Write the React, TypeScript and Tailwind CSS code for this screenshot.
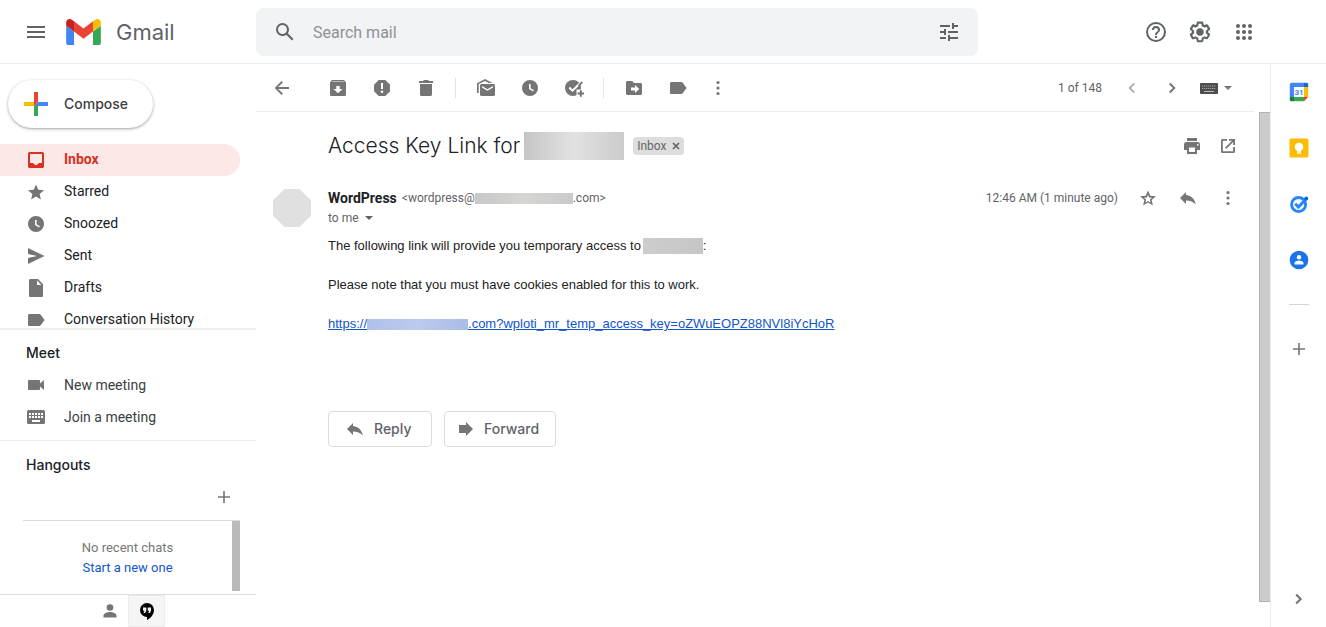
import React, { type ReactNode } from "react";

type IconProps = { children: ReactNode; box?: number; className?: string };

function Icon({ children, box = 20, className = "size-5" }: IconProps) {
  return (
    <svg viewBox={`0 0 ${box} ${box}`} className={`shrink-0 ${className}`} fill="currentColor" aria-hidden="true">
      {children}
    </svg>
  );
}

function IconButton({ label, children, className = "" }: { label: string; children: ReactNode; className?: string }) {
  return (
    <button type="button" aria-label={label} className={`flex shrink-0 items-center justify-center ${className}`}>
      {children}
    </button>
  );
}

const Clock = () => (
  <Icon>
    <path fillRule="evenodd" d="M10 2a8 8 0 1 0 0 16 8 8 0 0 0 0-16zm-1 4h1.6v4.2l3.3 2-.8 1.3L9 11z" />
  </Icon>
);
const Label = () => (
  <Icon>
    <path d="M13.4 4H3.6C2.7 4 2 4.7 2 5.6v8.8c0 .9.7 1.6 1.6 1.6h9.8c.5 0 1-.3 1.3-.7L18.6 10l-3.9-5.3c-.3-.4-.8-.7-1.3-.7z" />
  </Icon>
);
const More = () => (
  <Icon>
    <circle cx="10" cy="4.5" r="1.600" />
    <circle cx="10" cy="10" r="1.600" />
    <circle cx="10" cy="15.5" r="1.600" />
  </Icon>
);
const ReplyArrow = () => (
  <Icon>
    <path d="M8 7V4L2 10l6 6v-3.6c4.2 0 7.3 1.2 9.8 4.1-.7-4.200-3.300-8.500-9.800-9.500z" />
  </Icon>
);
const Plus = () => (
  <Icon>
    <path d="M16 10.800h-5.200V16H9.200v-5.200H4V9.200h5.200V4h1.600v5.200H16z" />
  </Icon>
);
const Caret = () => (
  <svg viewBox="0 0 8 4" className="h-1 w-2 shrink-0" fill="currentColor" aria-hidden="true">
    <path d="M0 0h8L4 4z" />
  </svg>
);
const Keyboard = () => (
  <Icon>
    <path
      fillRule="evenodd"
      d="M2.500 3h15A1.500 1.500 0 0 1 19 4.500v11a1.500 1.500 0 0 1-1.500 1.500h-15A1.500 1.500 0 0 1 1 15.500v-11A1.500 1.500 0 0 1 2.500 3zM3 6v2h2V6zm3 0v2h2V6zm3 0v2h2V6zm3 0v2h2V6zm3 0v2h2V6zM3 9v2h2V9zm3 0v2h2V9zm3 0v2h2V9zm3 0v2h2V9zm3 0v2h2V9zM6 13v2h8v-2z"
    />
  </Icon>
);

function Logo() {
  return (
    <svg viewBox="52 42 88 66" className="h-[26px] w-[35px]" aria-hidden="true">
      <path fill="#4285f4" d="M58 108h14V74L52 59v43c0 3.320 2.690 6 6 6" />
      <path fill="#34a853" d="M120 108h14c3.320 0 6-2.690 6-6V59l-20 15" />
      <path fill="#fbbc04" d="M120 48v26l20-15v-8c0-7.420-8.470-11.650-14.400-7.200" />
      <path fill="#ea4335" d="M72 74V48l24 18 24-18v26L96 92" />
      <path fill="#c5221f" d="M52 51v8l20 15V48l-5.600-4.200c-5.940-4.450-14.400-.22-14.400 7.200" />
    </svg>
  );
}

function Header() {
  return (
    <header className="flex h-16 shrink-0 items-center border-b border-[#ececec] text-[#5f6368]">
      <div className="flex w-64 shrink-0 items-center pl-6">
        <IconButton label="Main menu">
          <Icon box={24} className="size-6">
            <path d="M3 18h18v-2H3zm0-5h18v-2H3zm0-7v2h18V6z" />
          </Icon>
        </IconButton>
        <a href="#inbox" className="ml-[18px] flex items-center gap-[15px]">
          <Logo />
          <span className="font-['Inter',sans-serif] text-[22px] leading-6">Gmail</span>
        </a>
      </div>
      <form className="flex h-12 max-w-[722px] flex-1 items-center rounded-lg bg-[#f1f3f4] px-[17px]">
        <IconButton label="Search">
          <Icon box={24} className="size-6">
            <path d="M20.490 19l-5.730-5.730C15.530 12.200 16 10.910 16 9.500A6.500 6.500 0 1 0 9.500 16c1.410 0 2.700-.47 3.770-1.240L19 20.490zM5 9.500a4.500 4.500 0 1 1 9 0 4.500 4.500 0 0 1-9 0z" />
          </Icon>
        </IconButton>
        <input
          type="search"
          aria-label="Search mail"
          placeholder="Search mail"
          className="min-w-0 flex-1 bg-transparent px-4 pt-0.5 text-base outline-none placeholder:text-[#8e9194]"
        />
        <IconButton label="Show search options">
          <Icon box={24} className="size-6">
            <path d="M3 17v2h6v-2zM3 5v2h10V5zm10 16v-2h8v-2h-8v-2h-2v6zM7 9v2H3v2h4v2h2V9zm14 4v-2H11v2zm-6-4h2V7h4V5h-4V3h-2z" />
          </Icon>
        </IconButton>
      </form>
      <div className="mr-[70px] ml-auto flex gap-5">
        <IconButton label="Support">
          <Icon box={24} className="size-6">
            <path d="M11 18h2v-2h-2zm1-16a10 10 0 1 0 0 20 10 10 0 0 0 0-20zm0 18a8 8 0 1 1 0-16 8 8 0 0 1 0 16zm0-14a4 4 0 0 0-4 4h2a2 2 0 1 1 4 0c0 2-3 1.750-3 5h2c0-2.250 3-2.500 3-5a4 4 0 0 0-4-4z" />
          </Icon>
        </IconButton>
        <IconButton label="Settings">
          <Icon box={24} className="size-6">
            <path d="M13.850 22.250h-3.700c-.74 0-1.360-.54-1.450-1.270l-.27-1.890a7.500 7.500 0 0 1-.92-.53l-1.800.72c-.69.26-1.470-.03-1.810-.65L2.060 15.400c-.35-.66-.2-1.440.36-1.880l1.530-1.190a6.800 6.800 0 0 1 0-1.060L2.430 10.080c-.59-.46-.74-1.260-.37-1.880l1.850-3.210c.34-.62 1.110-.9 1.790-.63l1.810.73c.3-.2.600-.37.910-.52l.270-1.930c.09-.7.710-1.250 1.440-1.250h3.700c.740 0 1.360.54 1.450 1.270l.27 1.890c.32.16.620.34.920.530l1.800-.720c.7-.260 1.480.030 1.820.650l1.840 3.180c.36.66.2 1.440-.36 1.880l-1.520 1.190a7 7 0 0 1 0 1.060l1.520 1.190c.56.45.72 1.230.37 1.860l-1.860 3.220c-.34.62-1.110.9-1.800.63l-1.800-.72a7.500 7.500 0 0 1-.91.520l-.27 1.930c-.1.680-.72 1.220-1.460 1.220zm-3.230-2h2.760l.37-2.550.53-.22c.44-.18.88-.44 1.340-.78l.45-.34 2.380.96 1.380-2.400-2.030-1.580.07-.56a6 6 0 0 0 0-1.560l-.07-.56 2.030-1.580-1.390-2.400-2.390.96-.45-.35a6.400 6.400 0 0 0-1.320-.77l-.52-.22-.37-2.550h-2.760l-.37 2.550-.53.21c-.44.190-.880.440-1.340.790l-.45.330-2.380-.95-1.390 2.390 2.030 1.580-.07.560a6 6 0 0 0 0 1.580l.07.560-2.030 1.580 1.380 2.400 2.390-.96.450.350c.43.330.860.580 1.330.770l.53.220z" />
            <circle cx="12" cy="12" r="3.700" />
          </Icon>
        </IconButton>
        <IconButton label="Google apps">
          <Icon box={24} className="size-6">
            {[6, 12, 18].map((y) => [6, 12, 18].map((x) => <circle key={`${x}-${y}`} cx={x} cy={y} r="2" />))}
          </Icon>
        </IconButton>
      </div>
    </header>
  );
}

const folders: { name: string; icon: ReactNode; active?: boolean }[] = [
  {
    name: "Inbox",
    active: true,
    icon: (
      <Icon>
        <path fillRule="evenodd" d="M3.800 2h12.400c1 0 1.800.8 1.800 1.800v12.400c0 1-.8 1.800-1.800 1.800H3.800c-1 0-1.800-.8-1.800-1.800V3.800C2 2.800 2.800 2 3.800 2zM4 4v9h3.500v1h1.200v1h2.600v-1h1.200v-1H16V4z" />
      </Icon>
    ),
  },
  {
    name: "Starred",
    icon: (
      <Icon>
        <path d="M10 14.600l4.900 3-1.300-5.600L18 8.200l-5.700-.5L10 2.400 7.700 7.700 2 8.200 6.400 12l-1.300 5.600z" />
      </Icon>
    ),
  },
  { name: "Snoozed", icon: <Clock /> },
  {
    name: "Sent",
    icon: (
      <Icon>
        <path d="M2 2l16.500 8L2 18v-6l9-2-9-2z" />
      </Icon>
    ),
  },
  {
    name: "Drafts",
    icon: (
      <Icon>
        <path fillRule="evenodd" d="M4.600 1h7.400l5 5v11.400c0 .9-.7 1.600-1.600 1.600H4.600c-.9 0-1.600-.7-1.600-1.600V2.600C3 1.700 3.700 1 4.600 1zM11 2.500V7h4.500z" />
      </Icon>
    ),
  },
  { name: "Conversation History", icon: <Label /> },
];

function Sidebar() {
  return (
    <aside className="flex w-64 shrink-0 flex-col">
      <div className="px-2 py-4">
        <button
          type="button"
          className="flex h-12 items-center gap-[10px] rounded-full pr-[25px] pl-[10px] font-['Inter',sans-serif] text-sm font-medium text-[#3c4043] shadow-[0_1px_2px_0_rgba(60,64,67,0.3),0_1px_3px_1px_rgba(60,64,67,0.15)]"
        >
          <Icon box={36} className="size-9">
            <path fill="#34a853" d="M16 16v14h4V20z" />
            <path fill="#4285f4" d="M30 16H20l-4 4h14z" />
            <path fill="#fbbc05" d="M6 16v4h10l4-4z" />
            <path fill="#ea4335" d="M20 16V6h-4v14z" />
          </Icon>
          Compose
        </button>
      </div>
      <nav className="min-h-0 flex-1 overflow-hidden pr-4 text-sm">
        {folders.map((f) => (
          <a
            key={f.name}
            href={`#${f.name}`}
            className={
              f.active
                ? "flex h-8 items-center gap-[18px] rounded-r-full bg-[#fce8e6] pl-[26px] font-bold text-[#d93025]"
                : "flex h-8 items-center gap-[18px] pl-[26px] text-[#202124]"
            }
          >
            <span className={f.active ? "text-[#d93025]" : "text-[#757575]"}>{f.icon}</span>
            <span className="pb-0.5">{f.name}</span>
          </a>
        ))}
      </nav>
      <section className="border-t-2 border-[#efefef] pb-[7px] text-sm text-[#3c4043]">
        <h2 className="flex h-[39px] items-center pt-1.5 pl-[26px] font-['Inter',sans-serif] text-sm font-medium text-[#202124]">
          Meet
        </h2>
        <a href="#new-meeting" className="flex h-8 items-center gap-[18px] pl-[26px]">
          <Icon className="size-5 text-[#757575]">
            <path d="M14 8.500V5.800c0-.5-.4-.8-.8-.8H2.800c-.4 0-.8.300-.8.800v8.400c0 .500.400.800.800.800h10.400c.4 0 .8-.3.800-.8v-2.700l4 3.500V5z" />
          </Icon>
          New meeting
        </a>
        <a href="#join-meeting" className="flex h-8 items-center gap-[18px] pl-[26px]">
          <span className="text-[#757575]"><Keyboard /></span>
          Join a meeting
        </a>
      </section>
      <section className="border-t border-[#ececec] pt-3">
        <h2 className="flex h-6 items-center pl-[26px] font-['Inter',sans-serif] text-sm font-medium text-[#202124]">
          Hangouts
        </h2>
        <div className="flex h-[43px] items-center justify-end pr-[22px] pb-1 text-[#757575]">
          <IconButton label="New conversation">
            <Plus />
          </IconButton>
        </div>
        <div className="mr-4 ml-[23px] flex border-t border-[#dadce0]">
          <div className="flex-1 pt-[17px] text-center text-[13px] leading-5 text-[#777]">
            <p>No recent chats</p>
            <a href="#new-chat" className="text-[#15c]">
              Start a new one
            </a>
          </div>
          <div className="mb-[3px] h-[70px] w-2 bg-[#bababa]" />
        </div>
      </section>
      <div className="flex h-[33px] shrink-0 justify-center border-t border-[#dadce0]">
        <IconButton label="Contacts" className="w-[37px] text-[#757575]">
          <Icon>
            <circle cx="10" cy="6.500" r="3.300" />
            <path d="M3.500 16.500v-2c0-2.300 3.800-3.500 6.500-3.500s6.500 1.200 6.500 3.500v2z" />
          </Icon>
        </IconButton>
        <IconButton label="Hangouts" className="w-[37px] border border-[#ececec] bg-[#f5f5f5] text-black">
          <Icon>
            <path
              fillRule="evenodd"
              d="M10 2a7 7 0 1 0 0 14v3c3.700-1.900 7-5.600 7-10a7 7 0 0 0-7-7zM6 6.500h3.300v3.200L8.100 12H6.500l1-2.200H6zm4.700 0H14v3.200L12.800 12h-1.600l1-2.200h-1.500z"
            />
          </Icon>
        </IconButton>
      </div>
    </aside>
  );
}

function Toolbar() {
  return (
    <div className="mr-4 flex h-12 shrink-0 items-center border-b border-[#ececec] pl-4 text-[#757575]">
      <IconButton label="Back to Inbox" className="mr-9">
        <Icon>
          <path d="M17 9.100H6.200l4.700-4.700L9.600 3.100 2.700 10l6.900 6.900 1.300-1.300-4.700-4.700H17z" />
        </Icon>
      </IconButton>
      <div className="flex gap-6">
        <IconButton label="Archive">
          <Icon>
            <path fillRule="evenodd" d="M4 2h12l2 2.400v12c0 .9-.7 1.600-1.600 1.600H3.600c-.9 0-1.600-.7-1.600-1.600v-12zm-.2 1.800h12.400l-.7-.6h-11zM8.300 8v3H5.500l4.500 4.300 4.500-4.300h-2.800V8z" />
          </Icon>
        </IconButton>
        <IconButton label="Report spam">
          <Icon>
            <path fillRule="evenodd" d="M6.700 2h6.600L18 6.700v6.600L13.300 18H6.700L2 13.300V6.700zM9 5v6h2V5zm1 7.500a1.300 1.300 0 1 0 0 2.600 1.300 1.300 0 0 0 0-2.600z" />
          </Icon>
        </IconButton>
        <IconButton label="Delete">
          <Icon>
            <path d="M3 3h4l1-1h4l1 1h4v2H3zm1 3h12v10.500c0 .8-.7 1.500-1.500 1.500h-9c-.8 0-1.500-.7-1.500-1.500z" />
          </Icon>
        </IconButton>
      </div>
      <div className="mr-5 ml-[19px] h-5 w-px bg-[#e3e3e3]" />
      <div className="flex gap-6">
        <IconButton label="Mark as unread">
          <Icon>
            <path fillRule="evenodd" d="M5.500 6h12c.8 0 1.500.7 1.500 1.500v9c0 .8-.7 1.500-1.500 1.500h-12c-.8 0-1.500-.7-1.500-1.500v-9C4 6.700 4.700 6 5.500 6zm.5 2v1.500l5.500 3.300L17 9.500V8l-5.500 3.200z" />
            <path d="M1 15V5.200L9 1l7.500 4h-3.800L9 3 2.700 6v9z" />
          </Icon>
        </IconButton>
        <IconButton label="Snooze">
          <Clock />
        </IconButton>
        <IconButton label="Add to Tasks">
          <Icon>
            <circle cx="9" cy="10" r="8" />
            <path d="M5.300 9.500l3.200 3.200L19 2.200" fill="none" stroke="#fff" strokeWidth="2" />
            <path d="M14.500 7.800l3.800-3.800" fill="none" stroke="currentColor" strokeWidth="1.800" />
            <path d="M12.500 11.500H20V20h-7.500z" fill="#fff" />
            <path d="M15.800 12.200h2v2.200H20v2h-2.200v2.300h-2v-2.300h-2.300v-2h2.300z" />
          </Icon>
        </IconButton>
      </div>
      <div className="mr-5 ml-[19px] h-5 w-px bg-[#e3e3e3]" />
      <div className="flex gap-6">
        <IconButton label="Move to">
          <Icon>
            <path fillRule="evenodd" d="M3.500 3h4.700L10 5h6.500c.8 0 1.500.7 1.500 1.500v9c0 .8-.7 1.500-1.500 1.500h-13c-.8 0-1.500-.7-1.500-1.500v-11C2 3.700 2.700 3 3.500 3zM11 7v2.600H7v2.800h4V15l4.200-4z" />
          </Icon>
        </IconButton>
        <IconButton label="Labels">
          <Label />
        </IconButton>
      </div>
      <IconButton label="More" className="ml-5">
        <More />
      </IconButton>
      <div className="ml-auto flex items-center pr-[22px]">
        <span className="text-[12px] text-[#5f6368]">1 of 148</span>
        <IconButton label="Newer" className="ml-5 text-[#a0a0a0]">
          <Icon>
            <path d="M12.200 5.500L7.800 10l4.400 4.500" fill="none" stroke="currentColor" strokeWidth="1.600" />
          </Icon>
        </IconButton>
        <IconButton label="Older" className="ml-5">
          <Icon>
            <path d="M7.800 5.500l4.400 4.500-4.400 4.500" fill="none" stroke="currentColor" strokeWidth="2" />
          </Icon>
        </IconButton>
        <button type="button" aria-label="Select input tool" className="ml-[18px] flex items-center gap-1.5">
          <svg viewBox="0 0 18 11" className="mt-0.5 h-[11px] w-[18px]" aria-hidden="true">
            <rect width="18" height="11" rx="1" fill="#4d4d4d" />
            <path d="M2 3h14M2 5.500h14" stroke="#a8a8a8" strokeWidth="1.200" strokeDasharray="1.200 .8" />
            <path d="M4 8.500h10" stroke="#bcbcbc" />
          </svg>
          <Caret />
        </button>
      </div>
    </div>
  );
}

function Message() {
  return (
    <article className="min-w-0 flex-1 pt-5 pr-[21px] pl-4">
      <div className="flex h-7 items-center pl-14">
        <h1 className="font-['Inter',sans-serif] text-[21px] leading-7 font-light whitespace-nowrap text-[#202124]">
          Access Key Link for
        </h1>
        <span className="ml-1 h-7 w-[100px] bg-linear-to-r from-[#c5c5c5] via-[#e2e2e2] to-[#cbcbcd]" />
        <span className="ml-[9px] flex h-[18px] items-center gap-[5px] rounded bg-[#ddd] px-1 text-[12px] text-[#666]">
          Inbox
          <button type="button" aria-label="Remove label Inbox">
            <svg viewBox="0 0 8 8" className="size-2" aria-hidden="true">
              <path d="M1 1l6 6M7 1L1 7" stroke="#666" strokeWidth="1.700" />
            </svg>
          </button>
        </span>
        <div className="ml-auto flex gap-4 text-[#757575]">
          <IconButton label="Print all">
            <Icon>
              <path fillRule="evenodd" d="M5 2h10v3H5zM4.500 6h11A2.500 2.500 0 0 1 18 8.500V14h-3v4H5v-4H2V8.500A2.500 2.500 0 0 1 4.500 6zM7 11.500V16h6v-4.500zM15 8v1.500h1.500V8z" />
            </Icon>
          </IconButton>
          <IconButton label="In new window">
            <Icon>
              <path d="M15.200 15.200H4.800V4.800H9V3H4.500C3.700 3 3 3.700 3 4.500v11c0 .8.700 1.500 1.500 1.500h11c.8 0 1.500-.7 1.500-1.500V11h-1.800zM11 3v1.800h3l-7 7L8.200 13l7-7v3H17V3z" />
            </Icon>
          </IconButton>
        </div>
      </div>
      <div className="mt-7 flex">
        <svg viewBox="0 0 40 40" className="mr-4 size-10 shrink-0" role="img" aria-label="WordPress">
          <path d="M12.500 1h15L39 12.500v15L27.500 39h-15L1 27.500v-15z" fill="#e0e0e0" />
        </svg>
        <div className="min-w-0 flex-1">
          <div className="flex h-5 items-center text-[#5f6368]">
            <span className="text-sm font-bold text-[#202124]">WordPress</span>
            <span className="ml-[5px] flex items-center text-[12px]">
              &lt;wordpress@
              <span className="h-[11px] w-[98px] bg-linear-to-r from-[#c8c8c8] via-[#d5d5d3] to-[#cacaca]" />
              .com&gt;
            </span>
            <time className="ml-auto text-[12px]">12:46 AM (1 minute ago)</time>
            <div className="ml-5 flex gap-5 text-[#757575]">
              <IconButton label="Star">
                <Icon>
                  <path fillRule="evenodd" d="M18 8.200l-5.700-.5L10 2.400 7.700 7.700 2 8.200 6.400 12l-1.300 5.600 4.900-3 4.900 3-1.300-5.600zM10 12.900l-2.500 1.500.7-2.800L6 9.700l2.900-.3L10 6.700l1.100 2.700 2.900.3-2.200 1.900.7 2.800z" />
                </Icon>
              </IconButton>
              <IconButton label="Reply to sender">
                <ReplyArrow />
              </IconButton>
              <IconButton label="More message options">
                <More />
              </IconButton>
            </div>
          </div>
          <button type="button" aria-label="Show details" className="flex h-5 items-center gap-1.5 text-[12px] text-[#5f6368]">
            to me <Caret />
          </button>
          <div className="mt-2 flex flex-col gap-[19px] font-['Liberation_Sans',sans-serif] text-[13px] leading-5 text-[#222]">
            <p className="flex items-center">
              The following link will provide you temporary access to
              <span className="ml-0.5 h-4 w-[60px] bg-linear-to-r from-[#cdcdcd] to-[#c6c6c6]" />:
            </p>
            <p>Please note that you must have cookies enabled for this to work.</p>
            <p>
              <a href="#access" className="inline-flex items-center text-[#15c] underline">
                https://
                <span className="h-[11px] w-[101px] bg-linear-to-r from-[#aec1ea] via-[#bccbec] to-[#a9bce8]" />
                .com?wploti_mr_temp_access_key=oZWuEOPZ88NVl8iYcHoR
              </a>
            </p>
          </div>
          <div className="mt-[77px] flex gap-3 font-['Inter',sans-serif] text-sm font-medium text-[#5f6368]">
            <button type="button" className="flex h-9 w-[104px] items-center gap-[9px] rounded border border-[#dadce0] pl-4">
              <span className="text-[#757575]"><ReplyArrow /></span>
              Reply
            </button>
            <button type="button" className="flex h-9 w-28 items-center gap-[9px] rounded border border-[#dadce0] pl-[10px]">
              <Icon className="size-5 text-[#757575]">
                <path d="M4 6h7V3l7 7-7 7v-3H4z" />
              </Icon>
              Forward
            </button>
          </div>
        </div>
      </div>
    </article>
  );
}

function SidePanel() {
  return (
    <aside className="flex w-14 shrink-0 flex-col items-center border-l border-[#ececec] pt-[18px] pb-[18px] text-[#757575]">
      <div className="flex flex-col items-center gap-9">
        <IconButton label="Calendar">
          <Icon>
            <path fill="#4285f4" d="M2 .8h13V5H5v10H.8V2z" />
            <path fill="#1967d2" d="M15 .8h3.200l1 1V5H15z" />
            <path fill="#fbbc04" d="M15 5h4.200v10H15z" />
            <path fill="#34a853" d="M5 15h10v4.200H5z" />
            <path fill="#188038" d="M.8 15H5v4.200H1.800l-1-1z" />
            <path fill="#ea4335" d="M15 15h4.200L15 19.200z" />
            <path fill="#fff" d="M5 5h10v10H5z" />
            <text x="10" y="13" textAnchor="middle" fontFamily="Roboto, sans-serif" fontWeight="700" fontSize="8" fill="#4285f4">
              31
            </text>
          </Icon>
        </IconButton>
        <IconButton label="Keep">
          <Icon>
            <rect x=".5" y=".5" width="19" height="19" rx="1.500" fill="#fbbc04" />
            <path fill="#fff" d="M10 4.800a4.200 4.200 0 0 0-2 7.900v1h4v-1a4.200 4.200 0 0 0-2-7.900zM8 14.300h4v1.400H8z" />
          </Icon>
        </IconButton>
        <IconButton label="Tasks">
          <Icon>
            <circle cx="9.600" cy="10.500" r="7" fill="none" stroke="#2684fc" strokeWidth="2.900" />
            <path d="M6.200 9.800l3.200 3.200 8.300-8.600" fill="none" stroke="#2684fc" strokeWidth="3" />
            <circle cx="17.200" cy="4.500" r="1.900" fill="#0066da" />
          </Icon>
        </IconButton>
        <IconButton label="Contacts panel">
          <Icon>
            <circle cx="10" cy="10" r="9.300" fill="#1a73e8" />
            <circle cx="10" cy="7.200" r="2.200" fill="#fff" />
            <path d="M5.500 14.500v-1.300c0-1.800 2.700-2.700 4.500-2.700s4.500.9 4.500 2.700v1.300z" fill="#fff" />
          </Icon>
        </IconButton>
      </div>
      <div className="mt-[34px] mb-[34px] h-px w-5 shrink-0 bg-[#d2d4d6]" />
      <IconButton label="Get add-ons">
        <Plus />
      </IconButton>
      <IconButton label="Hide side panel" className="mt-auto">
        <Icon>
          <path d="M7.200 5.500l4.400 4.500-4.400 4.500" fill="none" stroke="currentColor" strokeWidth="2.200" />
        </Icon>
      </IconButton>
    </aside>
  );
}

export default function App() {
  return (
    <div className="flex h-screen flex-col overflow-hidden bg-white font-[Roboto,sans-serif]">
      <Header />
      <div className="flex min-h-0 flex-1">
        <Sidebar />
        <main className="flex min-w-0 flex-1 flex-col">
          <Toolbar />
          <div className="flex min-h-0 flex-1">
            <Message />
            <div className="mb-[25px] w-[11px] shrink-0 border border-r-0 border-[#b3b3b3] bg-[#cbcbcb]" />
          </div>
        </main>
        <SidePanel />
      </div>
    </div>
  );
}
